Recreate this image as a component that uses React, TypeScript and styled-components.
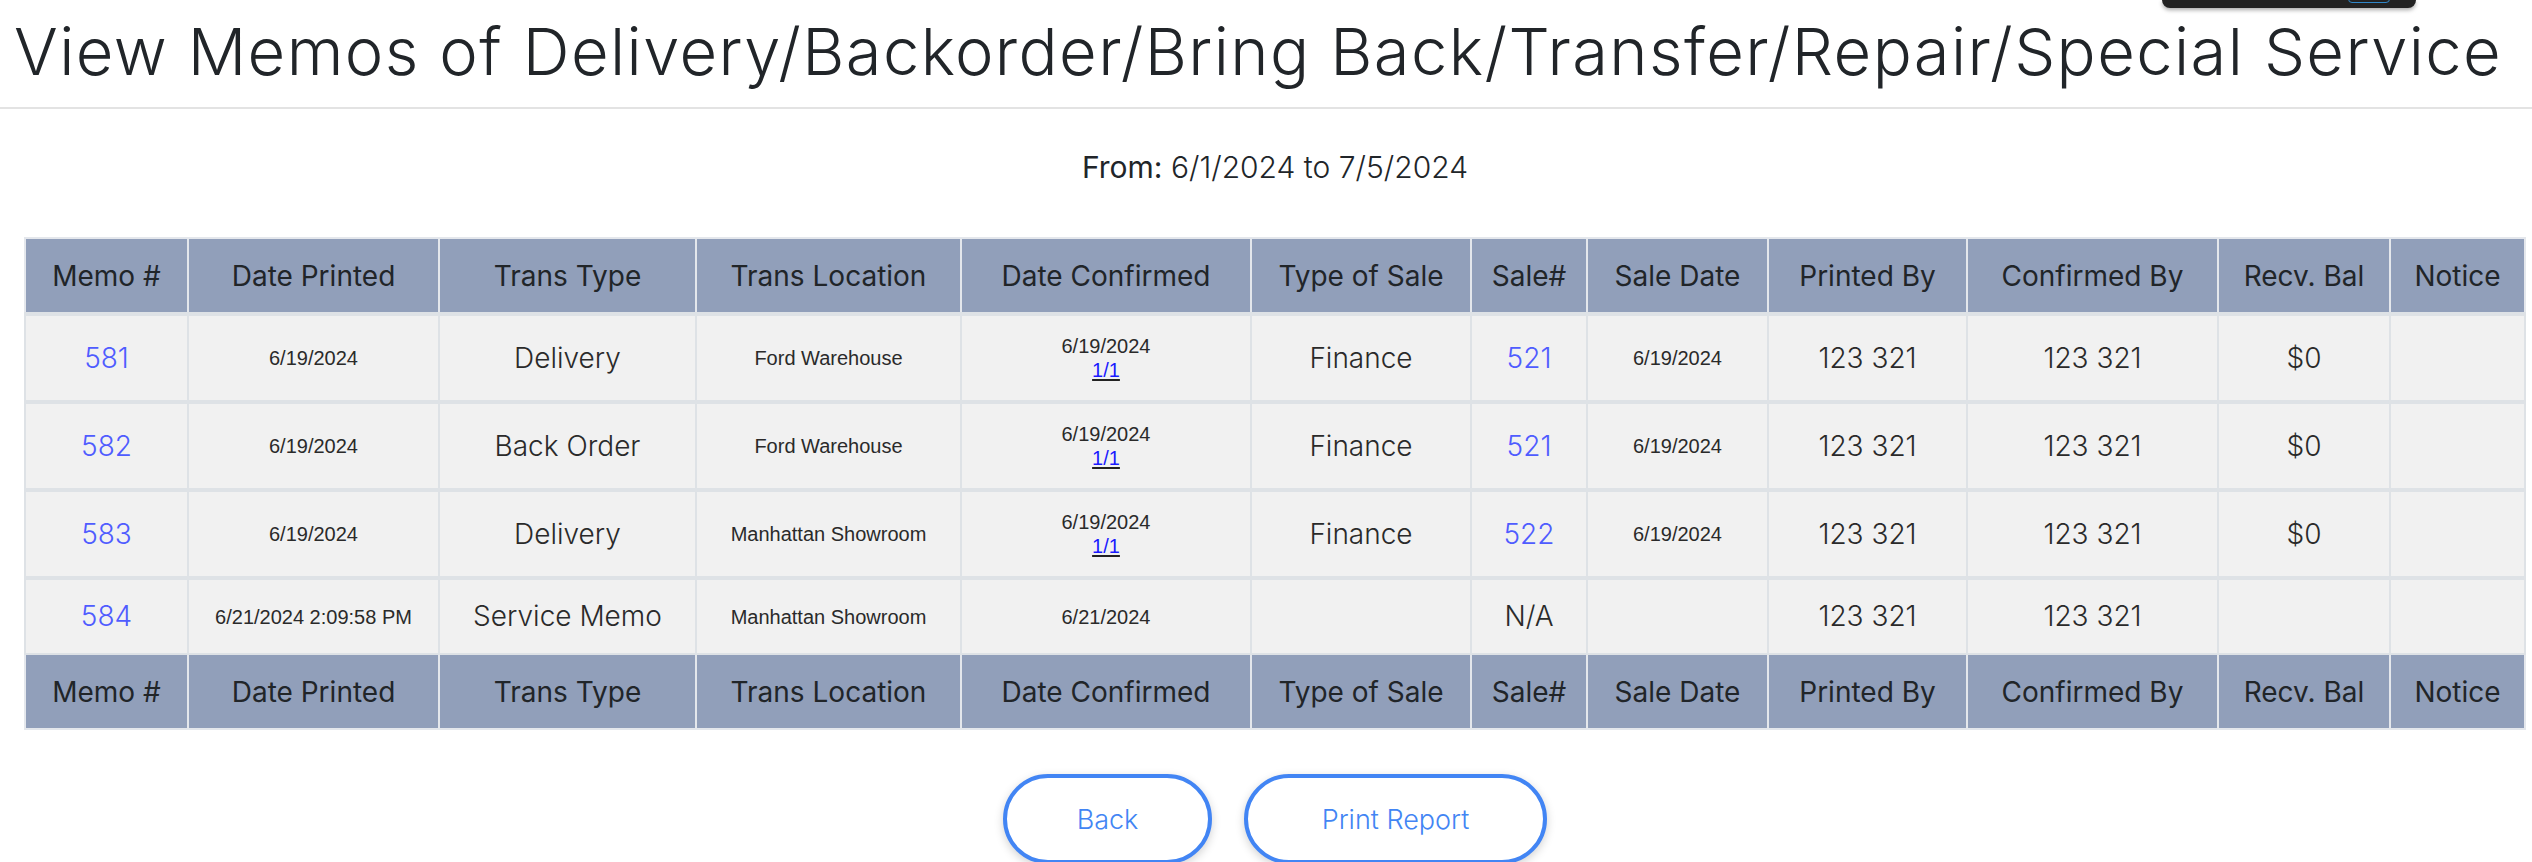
import styled, { createGlobalStyle } from "styled-components";

interface Memo {
	memo: string;
	printed: string;
	transType: string;
	location: string;
	confirmed: string;
	confirmLink?: string;
	saleType: string;
	saleNo: string;
	saleIsLink: boolean;
	saleDate: string;
	printedBy: string;
	confirmedBy: string;
	balance: string;
	notice: string;
}

const COLUMNS = [
	{ label: "Memo #", width: 163 },
	{ label: "Date Printed", width: 251 },
	{ label: "Trans Type", width: 257 },
	{ label: "Trans Location", width: 265 },
	{ label: "Date Confirmed", width: 290 },
	{ label: "Type of Sale", width: 220 },
	{ label: "Sale#", width: 116 },
	{ label: "Sale Date", width: 181 },
	{ label: "Printed By", width: 199 },
	{ label: "Confirmed By", width: 251 },
	{ label: "Recv. Bal", width: 172 },
	{ label: "Notice", width: 135 },
];

const MEMOS: Memo[] = [
	{
		memo: "581",
		printed: "6/19/2024",
		transType: "Delivery",
		location: "Ford Warehouse",
		confirmed: "6/19/2024",
		confirmLink: "1/1",
		saleType: "Finance",
		saleNo: "521",
		saleIsLink: true,
		saleDate: "6/19/2024",
		printedBy: "123 321",
		confirmedBy: "123 321",
		balance: "$0",
		notice: "",
	},
	{
		memo: "582",
		printed: "6/19/2024",
		transType: "Back Order",
		location: "Ford Warehouse",
		confirmed: "6/19/2024",
		confirmLink: "1/1",
		saleType: "Finance",
		saleNo: "521",
		saleIsLink: true,
		saleDate: "6/19/2024",
		printedBy: "123 321",
		confirmedBy: "123 321",
		balance: "$0",
		notice: "",
	},
	{
		memo: "583",
		printed: "6/19/2024",
		transType: "Delivery",
		location: "Manhattan Showroom",
		confirmed: "6/19/2024",
		confirmLink: "1/1",
		saleType: "Finance",
		saleNo: "522",
		saleIsLink: true,
		saleDate: "6/19/2024",
		printedBy: "123 321",
		confirmedBy: "123 321",
		balance: "$0",
		notice: "",
	},
	{
		memo: "584",
		printed: "6/21/2024 2:09:58 PM",
		transType: "Service Memo",
		location: "Manhattan Showroom",
		confirmed: "6/21/2024",
		saleType: "",
		saleNo: "N/A",
		saleIsLink: false,
		saleDate: "",
		printedBy: "123 321",
		confirmedBy: "123 321",
		balance: "",
		notice: "",
	},
];

function HeaderRow() {
	return (
		<tr>
			{COLUMNS.map((col) => (
				<Th key={col.label}>{col.label}</Th>
			))}
		</tr>
	);
}

function App() {
	return (
		<>
			<GlobalStyle />
			<Page>
				<FloatingBar>
					<FloatingButton />
				</FloatingBar>
				<Title>View Memos of Delivery/Backorder/Bring Back/Transfer/Repair/Special Service</Title>
				<Divider />
				<Content>
					<Range>
						<RangeLabel>From:</RangeLabel> 6/1/2024 to 7/5/2024
					</Range>
					<Table>
						<colgroup>
							{COLUMNS.map((col) => (
								<Col key={col.label} $width={col.width} />
							))}
						</colgroup>
						<thead>
							<HeaderRow />
						</thead>
						<tbody>
							{MEMOS.map((m) => (
								<Tr key={m.memo}>
									<Td>
										<MemoLink href="#">{m.memo}</MemoLink>
									</Td>
									<Td $small>{m.printed}</Td>
									<Td>{m.transType}</Td>
									<Td $small>{m.location}</Td>
									<Td $small>
										{m.confirmed}
										{m.confirmLink && (
											<>
												<br />
												<ConfirmLink href="#">{m.confirmLink}</ConfirmLink>
											</>
										)}
									</Td>
									<Td>{m.saleType}</Td>
									<Td>{m.saleIsLink ? <MemoLink href="#">{m.saleNo}</MemoLink> : m.saleNo}</Td>
									<Td $small>{m.saleDate}</Td>
									<Td>{m.printedBy}</Td>
									<Td>{m.confirmedBy}</Td>
									<Td>{m.balance}</Td>
									<Td>{m.notice}</Td>
								</Tr>
							))}
						</tbody>
						<tfoot>
							<HeaderRow />
						</tfoot>
					</Table>
					<Actions>
						<PillButton $width={209}>Back</PillButton>
						<PillButton $width={303}>Print Report</PillButton>
					</Actions>
				</Content>
			</Page>
		</>
	);
}

const GlobalStyle = createGlobalStyle`
	body {
		margin: 0;
		background: #fff;
		color: #212529;
		font-family: Inter, "Open Sans", sans-serif;
	}
`;

const Page = styled.div`
	position: relative;
	width: 2532px;
	padding-bottom: 40px;
`;

const FloatingBar = styled.div`
	position: absolute;
	top: 0;
	left: 2162px;
	width: 254px;
	height: 8px;
	background: #222;
	border-radius: 0 0 8px 8px;
	box-shadow: 0 2px 4px rgba(0, 0, 0, 0.35);
	overflow: hidden;
`;

const FloatingButton = styled.div`
	position: absolute;
	left: 186px;
	top: -8px;
	width: 40px;
	height: 9px;
	border: 1px solid #2f86c8;
	border-radius: 4px;
`;

const Title = styled.h1`
	margin: 0;
	padding: 19px 0 0 14px;
	height: 88px;
	font-size: 65px;
	line-height: 1;
	font-weight: 300;
	letter-spacing: 1.4px;
	color: #212529;
	white-space: nowrap;
`;

const Divider = styled.hr`
	margin: 0;
	border: 0;
	height: 2px;
	background: #e3e3e3;
`;

const Content = styled.main`
	width: 2500px;
	margin-left: 25px;
	display: flex;
	flex-direction: column;
	align-items: center;
`;

const Range = styled.p`
	margin: 38px 0 0;
	font-size: 30px;
	line-height: 40px;
	font-weight: 300;
	color: #212529;
`;

const RangeLabel = styled.span`
	font-weight: 400;
`;

const Table = styled.table`
	margin-top: 50px;
	width: 2500px;
	table-layout: fixed;
	border-collapse: collapse;
	border: 2px solid #dee2e6;
`;

const Col = styled.col<{ $width: number }>`
	width: ${({ $width }) => $width}px;
`;

const Th = styled.th`
	height: 71px;
	padding: 2px 4px 0;
	background: #919fba;
	border: 2px solid #e4e7ec;
	font-size: 28px;
	line-height: 39px;
	font-weight: 400;
	color: #212529;
	text-align: center;
	white-space: nowrap;
`;

const Tr = styled.tr`
	background: #f1f1f1;
`;

const Td = styled.td<{ $small?: boolean }>`
	padding: 18px 4px;
	border: 2px solid #dee2e6;
	border-top-width: 4px;
	text-align: center;
	vertical-align: middle;
	white-space: nowrap;
	color: #2a2a2a;
	font-family: ${({ $small }) => ($small ? '"Liberation Sans", Arial, sans-serif' : 'Inter, "Open Sans", sans-serif')};
	font-size: ${({ $small }) => ($small ? "20px" : "28px")};
	line-height: ${({ $small }) => ($small ? "24px" : "37px")};
	font-weight: ${({ $small }) => ($small ? 400 : 300)};
`;

const MemoLink = styled.a`
	color: #4f5cff;
	text-decoration: none;
`;

const ConfirmLink = styled.a`
	color: #1a1aff;
	text-decoration: underline;
	text-decoration-color: #222;
	text-underline-offset: 2px;
`;

const Actions = styled.div`
	display: flex;
	gap: 32px;
	margin-top: 44px;
`;

const PillButton = styled.button<{ $width: number }>`
	width: ${({ $width }) => $width}px;
	height: 90px;
	padding: 0;
	background: #fff;
	border: 4px solid #4285f4;
	border-radius: 45px;
	box-shadow: 0 3px 10px rgba(0, 0, 0, 0.18);
	font-family: Inter, "Open Sans", sans-serif;
	font-size: 27px;
	font-weight: 300;
	color: #4285f4;
	cursor: pointer;
`;

export default App;
